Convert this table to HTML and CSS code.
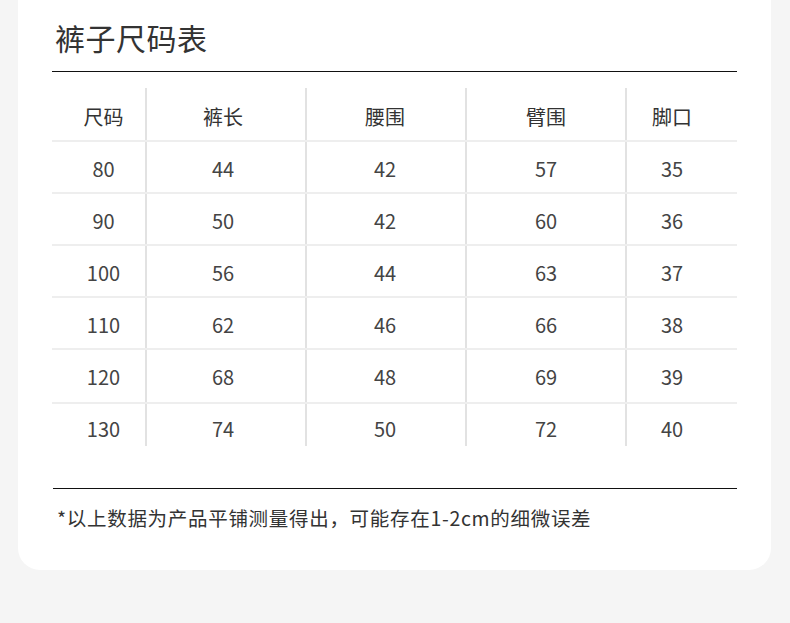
FILE: index.html
```html
<!DOCTYPE html>
<html lang="zh-CN">
<head>
<meta charset="utf-8">
<title>裤子尺码表</title>
<link rel="stylesheet" href="styles.css">
</head>
<body>
<div class="page">
  <section class="card">
    <h1 class="title">裤子尺码表</h1>
    <div class="rule"></div>
    <div class="table">
      <div class="row head">
        <div class="cell c1">尺码</div>
        <div class="cell c2">裤长</div>
        <div class="cell c3">腰围</div>
        <div class="cell c4">臂围</div>
        <div class="cell c5">脚口</div>
      </div>
      <div class="row">
        <div class="cell c1">80</div><div class="cell c2">44</div><div class="cell c3">42</div><div class="cell c4">57</div><div class="cell c5">35</div>
      </div>
      <div class="row">
        <div class="cell c1">90</div><div class="cell c2">50</div><div class="cell c3">42</div><div class="cell c4">60</div><div class="cell c5">36</div>
      </div>
      <div class="row">
        <div class="cell c1">100</div><div class="cell c2">56</div><div class="cell c3">44</div><div class="cell c4">63</div><div class="cell c5">37</div>
      </div>
      <div class="row">
        <div class="cell c1">110</div><div class="cell c2">62</div><div class="cell c3">46</div><div class="cell c4">66</div><div class="cell c5">38</div>
      </div>
      <div class="row tall">
        <div class="cell c1">120</div><div class="cell c2">68</div><div class="cell c3">48</div><div class="cell c4">69</div><div class="cell c5">39</div>
      </div>
      <div class="row last">
        <div class="cell c1">130</div><div class="cell c2">74</div><div class="cell c3">50</div><div class="cell c4">72</div><div class="cell c5">40</div>
      </div>
    </div>
    <div class="rule bottom"></div>
    <p class="note">*以上数据为产品平铺测量得出，可能存在1-2cm的细微误差</p>
  </section>
</div>
</body>
</html>
```

FILE: styles.css
```css
* { box-sizing: border-box; }
html, body {
  margin: 0;
  padding: 0;
  background: #f5f5f5;
  font-family: "Noto Sans CJK SC", "Noto Sans", sans-serif;
}
.page {
  width: 790px;
  height: 623px;
  padding: 0 19px 0 18px;
  overflow: hidden;
}
.card {
  background: #fff;
  border-radius: 0 0 22px 22px;
  padding: 17px 34px 0 34px;
  height: 570px;
}
.title {
  margin: 0 0 0 3px;
  font-size: 30px;
  line-height: 40px;
  font-weight: 400;
  color: #333;
  letter-spacing: 0.5px;
}
.rule {
  height: 1px;
  background: #111;
  margin-top: 14px;
}
.rule.bottom {
  margin-top: 42px;
  margin-left: 1px;
}
.table {
  margin-top: 16px;
}
.row {
  display: grid;
  grid-template-columns: 93px 160px 160px 160px 1fr;
  height: 52px;
  border-bottom: 2px solid #eeeeee;
}
.row.head {
  height: 54px;
}
.row.tall {
  height: 54px;
}
.row.last {
  height: 42px;
  border-bottom: none;
}
.cell {
  display: flex;
  align-items: center;
  justify-content: center;
  font-size: 20px;
  color: #444;
  padding-top: 2px;
}
.row.tall .cell {
  padding-top: 1px;
}
.row.last .cell {
  align-items: flex-start;
  padding-top: 10px;
}
.head .cell {
  color: #333;
  padding-top: 4px;
}
.c2, .c3, .c4, .c5 {
  border-left: 2px solid #e2e2e2;
}
.c1 { padding-left: 10px; }
.c2 { padding-right: 6px; }
.c3 { padding-right: 2px; }
.c5 { padding-right: 20px; }
.note {
  margin: 15px 0 0 5px;
  font-size: 19.5px;
  line-height: 28px;
  color: #333;
  letter-spacing: 0.7px;
}
```
